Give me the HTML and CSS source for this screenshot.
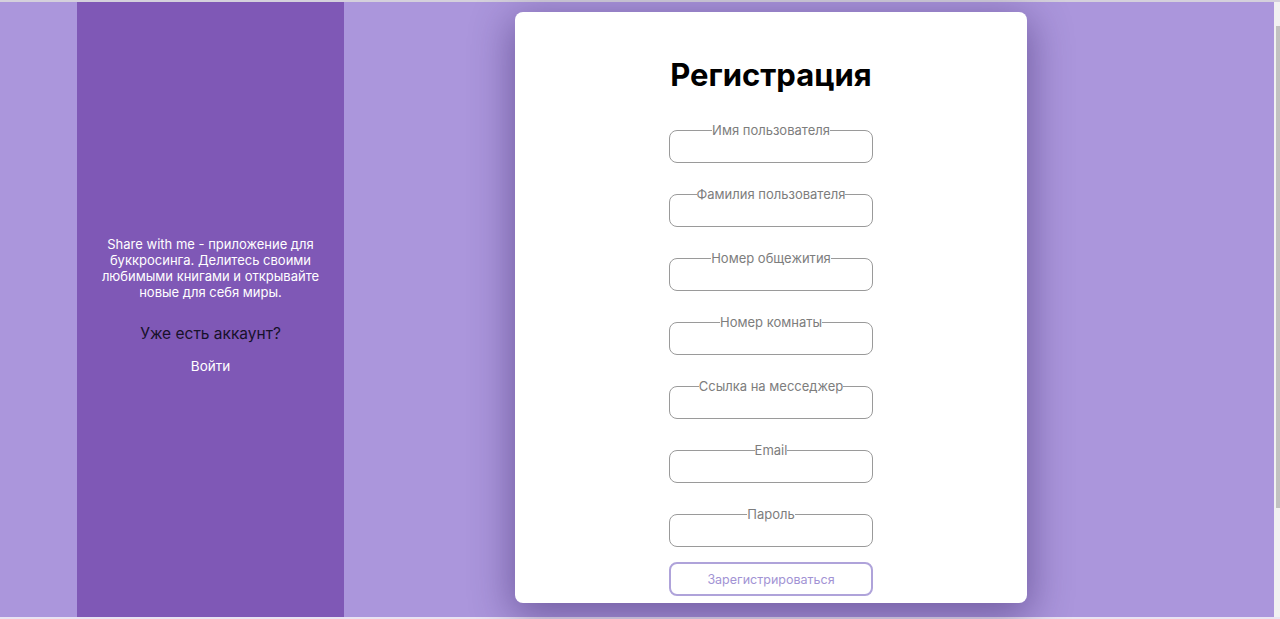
FILE: index.html
```html
<!DOCTYPE html>
<html lang="ru">
<head>
<meta charset="utf-8">
<title>Регистрация</title>
<link rel="stylesheet" href="styles.css">
</head>
<body>
<div class="frame">
  <main class="page">
    <div class="gutter"></div>
    <aside class="side">
      <p class="about">Share with me - приложение для буккросинга. Делитесь своими любимыми книгами и открывайте новые для себя миры.</p>
      <h2 class="have">Уже есть аккаунт?</h2>
      <a class="login" href="#">Войти</a>
    </aside>
    <div class="gap"></div>
    <section class="card">
      <h1 class="title">Регистрация</h1>
      <form class="form">
        <fieldset class="field"><legend>Имя пользователя</legend><input type="text"></fieldset>
        <fieldset class="field"><legend>Фамилия пользователя</legend><input type="text"></fieldset>
        <fieldset class="field"><legend>Номер общежития</legend><input type="text"></fieldset>
        <fieldset class="field"><legend>Номер комнаты</legend><input type="text"></fieldset>
        <fieldset class="field"><legend>Ссылка на месседжер</legend><input type="text"></fieldset>
        <fieldset class="field"><legend>Email</legend><input type="email"></fieldset>
        <fieldset class="field"><legend>Пароль</legend><input type="password"></fieldset>
        <button class="submit" type="button">Зарегистрироваться</button>
      </form>
    </section>
  </main>
  <div class="scrollbar"><div class="thumb"></div></div>
</div>
</body>
</html>
```
FILE: styles.css
```css
* { box-sizing: border-box; }
html, body { margin: 0; padding: 0; }
body {
  font-family: Inter, "Noto Sans", sans-serif;
  background: #ffffff;
  width: 1280px;
  height: 619px;
  overflow: hidden;
}
.frame {
  display: flex;
  height: 619px;
  border-top: 2px solid #d4d0dc;
  border-bottom: 2px solid #e9e4f2;
}
.page {
  flex: 1;
  display: grid;
  grid-template-columns: 77px 267px 171px 512px 1fr;
  background: #ab96dc;
  height: 615px;
}
.side {
  background: #7f58b6;
  display: flex;
  flex-direction: column;
  align-items: center;
  padding-top: 234px;
  text-align: center;
}
.about {
  margin: 0;
  width: 236px;
  color: #ffffff;
  font-size: 13px;
  line-height: 16px;
}
.have {
  margin: 24px 0 0;
  font-size: 15.5px;
  line-height: 20px;
  font-weight: 400;
  color: #17112a;
}
.login {
  margin-top: 14px;
  font-size: 13.5px;
  line-height: 17px;
  color: #ffffff;
  text-decoration: none;
}
.card {
  margin-top: 10px;
  height: 591px;
  background: #ffffff;
  border-radius: 8px;
  box-shadow: 0 10px 40px 4px rgba(45, 25, 90, 0.45);
  display: flex;
  flex-direction: column;
  align-items: center;
  padding-top: 43px;
}
.title {
  margin: 0;
  font-size: 31px;
  line-height: 40px;
  font-weight: 700;
  color: #000000;
}
.form {
  margin-top: 27px;
  display: flex;
  flex-direction: column;
  align-items: center;
  gap: 23px;
}
.field {
  width: 204px;
  height: 41px;
  margin: 0;
  padding: 0 8px;
  border: 1px solid #9a9a9a;
  border-radius: 8px;
}
.field legend {
  margin: 0 auto;
  padding: 0;
  font-size: 13px;
  line-height: 16px;
  color: #7d7d7d;
}
.field input {
  display: block;
  width: 100%;
  height: 24px;
  border: none;
  outline: none;
  background: transparent;
  font-family: inherit;
  font-size: 13px;
}
.submit {
  margin-top: -8px;
  width: 204px;
  height: 34px;
  background: #ffffff;
  border: 2px solid #afa3da;
  border-radius: 8px;
  color: #a293d4;
  font-family: inherit;
  font-size: 12.5px;
  cursor: pointer;
}
.scrollbar {
  width: 6px;
  height: 615px;
  background: #f1f1f1;
  padding-top: 24px;
  display: flex;
  justify-content: flex-end;
}
.thumb {
  width: 4px;
  height: 482px;
  background: #c1c1c1;
}
```
